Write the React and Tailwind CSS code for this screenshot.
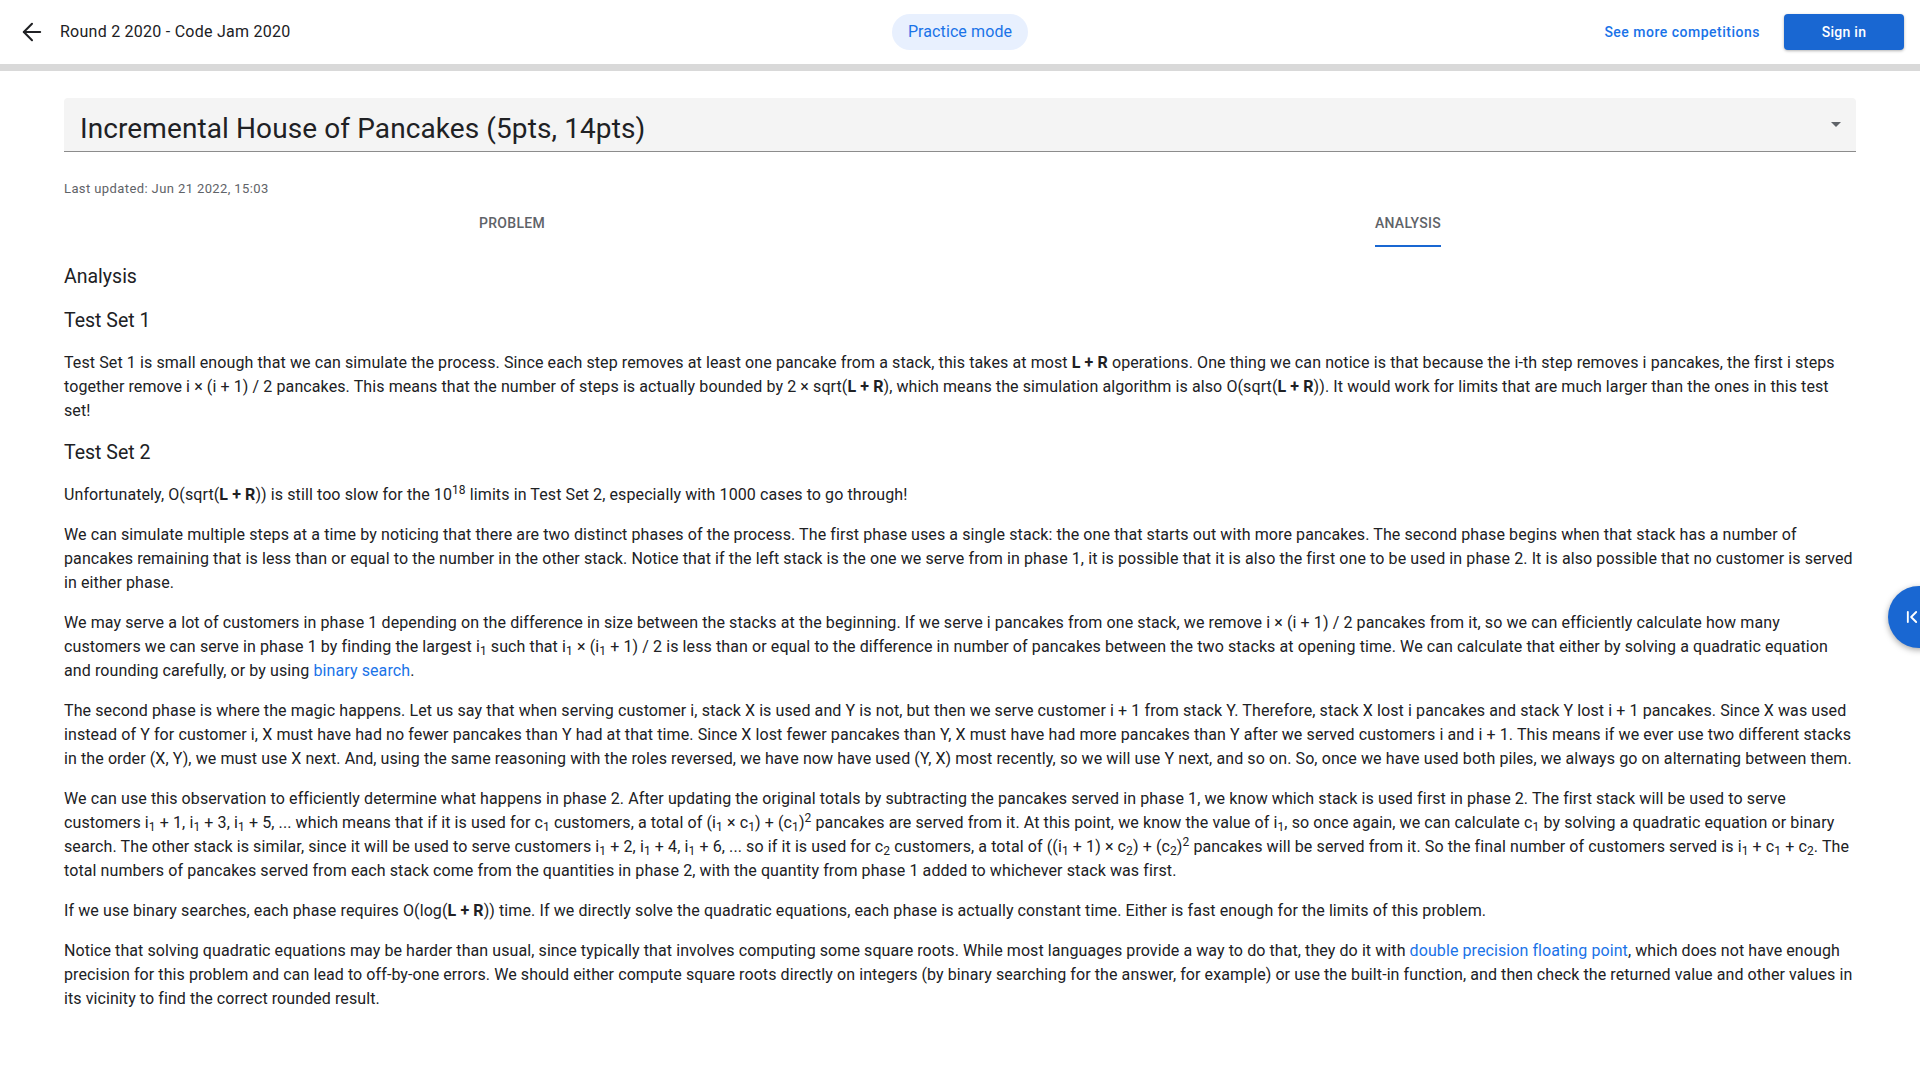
import { ArrowLeft, ChevronFirst } from "lucide-react";

const LR = () => <b className="font-bold">L + R</b>;
const S = ({ v, n }) => (
  <span className="whitespace-nowrap">
    {v}
    <sub>{n}</sub>
  </span>
);

function Tab({ label, active }) {
  return (
    <div className="flex justify-center">
      <div className="flex flex-col items-center h-12 pt-[14px]">
        <span className="text-sm font-medium tracking-[0.3px] text-[#5f6368] leading-5">{label}</span>
        <span className={"mt-auto h-[2px] w-full " + (active ? "bg-[#1967d2]" : "bg-transparent")} />
      </div>
    </div>
  );
}

export default function App() {
  return (
    <div className="relative min-h-screen overflow-hidden bg-white font-['Roboto',sans-serif] text-[#202124]">
      <header className="grid h-[71px] grid-cols-[1fr_auto_1fr] items-center border-b-[7px] border-[#d9d9d9]">
        <div className="flex items-center">
          <ArrowLeft size={28} strokeWidth={1.75} className="ml-[18px] text-[#202124]" />
          <span className="ml-[14px] text-base tracking-[0.25px]">Round 2 2020 - Code Jam 2020</span>
        </div>
        <div className="flex h-9 items-center rounded-full bg-[#e8f0fe] px-4 text-base tracking-[0.1px] text-[#1a73e8]">
          Practice mode
        </div>
        <div className="flex items-center justify-end pr-4">
          <span className="text-sm font-medium tracking-[0.5px] text-[#1a73e8]">See more competitions</span>
          <button className="ml-[24px] flex h-9 w-[120px] items-center justify-center rounded bg-[#1967d2] text-sm font-medium tracking-[0.25px] text-white shadow-[0_1px_3px_rgba(0,0,0,0.3)]">
            Sign in
          </button>
        </div>
      </header>

      <main className="px-16 pt-[27px]">
        <div className="flex h-[54px] items-center justify-between rounded-t bg-[#f4f4f4] border-b border-[#8c8c8c] pl-4 pr-[15px] pt-2">
          <h1 className="text-[28px] leading-9 tracking-[0.1px]">Incremental House of Pancakes (5pts, 14pts)</h1>
          <span className="mb-2 h-0 w-0 border-x-[5px] border-t-[5px] border-x-transparent border-t-[#5f6368]" />
        </div>

        <div className="mt-[27px] text-[13px] leading-5 tracking-[0.4px] text-[#5f6368]">
          Last updated: Jun 21 2022, 15:03
        </div>

        <div className="grid grid-cols-2">
          <Tab label="PROBLEM" />
          <Tab label="ANALYSIS" active />
        </div>

        <article className="mt-4 flex flex-col gap-4 text-base leading-6 tracking-[0.1px]">
          <h2 className="text-[19.5px] leading-7 tracking-normal">Analysis</h2>
          <h3 className="text-[19.5px] leading-7 tracking-normal">Test Set 1</h3>
          <p>
            Test Set 1 is small enough that we can simulate the process. Since each step removes at least one pancake
            from a stack, this takes at most <LR /> operations. One thing we can notice is that because the i-th step
            removes i pancakes, the first i steps together remove i × (i + 1) / 2 pancakes. This means that the number of
            steps is actually bounded by 2 × sqrt(<LR />), which means the simulation algorithm is also O(sqrt(<LR />)).
            It would work for limits that are much larger than the ones in this test set!
          </p>
          <h3 className="text-[19.5px] leading-7 tracking-normal">Test Set 2</h3>
          <p>
            Unfortunately, O(sqrt(<LR />)) is still too slow for the 10<sup>18</sup> limits in Test Set 2, especially
            with 1000 cases to go through!
          </p>
          <p>
            We can simulate multiple steps at a time by noticing that there are two distinct phases of the process. The
            first phase uses a single stack: the one that starts out with more pancakes. The second phase begins when that
            stack has a number of pancakes remaining that is less than or equal to the number in the other stack. Notice
            that if the left stack is the one we serve from in phase 1, it is possible that it is also the first one to be
            used in phase 2. It is also possible that no customer is served in either phase.
          </p>
          <p>
            We may serve a lot of customers in phase 1 depending on the difference in size between the stacks at the
            beginning. If we serve i pancakes from one stack, we remove i × (i + 1) / 2 pancakes from it, so we can
            efficiently calculate how many customers we can serve in phase 1 by finding the largest <S v="i" n="1" /> such
            that <S v="i" n="1" /> × (<S v="i" n="1" /> + 1) / 2 is less than or equal to the difference in number of
            pancakes between the two stacks at opening time. We can calculate that either by solving a quadratic equation
            and rounding carefully, or by using <a className="text-[#1a73e8]">binary search</a>.
          </p>
          <p>
            The second phase is where the magic happens. Let us say that when serving customer i, stack X is used and Y is
            not, but then we serve customer i + 1 from stack Y. Therefore, stack X lost i pancakes and stack Y lost i + 1
            pancakes. Since X was used instead of Y for customer i, X must have had no fewer pancakes than Y had at that
            time. Since X lost fewer pancakes than Y, X must have had more pancakes than Y after we served customers i and
            i + 1. This means if we ever use two different stacks in the order (X, Y), we must use X next. And, using the
            same reasoning with the roles reversed, we have now have used (Y, X) most recently, so we will use Y next, and
            so on. So, once we have used both piles, we always go on alternating between them.
          </p>
          <p>
            We can use this observation to efficiently determine what happens in phase 2. After updating the original
            totals by subtracting the pancakes served in phase 1, we know which stack is used first in phase 2. The first
            stack will be used to serve customers <S v="i" n="1" /> + 1, <S v="i" n="1" /> + 3, <S v="i" n="1" /> + 5,
            ... which means that if it is used for <S v="c" n="1" /> customers, a total of (<S v="i" n="1" /> ×{" "}
            <S v="c" n="1" />) + (<S v="c" n="1" />)<sup>2</sup> pancakes are served from it. At this point, we know the
            value of <S v="i" n="1" />, so once again, we can calculate <S v="c" n="1" /> by solving a quadratic equation
            or binary search. The other stack is similar, since it will be used to serve customers <S v="i" n="1" /> + 2,{" "}
            <S v="i" n="1" /> + 4, <S v="i" n="1" /> + 6, ... so if it is used for <S v="c" n="2" /> customers, a total
            of ((<S v="i" n="1" /> + 1) × <S v="c" n="2" />) + (<S v="c" n="2" />)<sup>2</sup> pancakes will be served
            from it. So the final number of customers served is <S v="i" n="1" /> + <S v="c" n="1" /> +{" "}
            <S v="c" n="2" />. The total numbers of pancakes served from each stack come from the quantities in phase 2,
            with the quantity from phase 1 added to whichever stack was first.
          </p>
          <p>
            If we use binary searches, each phase requires O(log(<LR />)) time. If we directly solve the quadratic
            equations, each phase is actually constant time. Either is fast enough for the limits of this problem.
          </p>
          <p className="tracking-[0.085px]">
            Notice that solving quadratic equations may be harder than usual, since typically that involves computing some
            square roots. While most languages provide a way to do that, they do it with{" "}
            <a className="text-[#1a73e8]">double precision floating point</a>, which does not have enough precision for
            this problem and can lead to off-by-one errors. We should either compute square roots directly on integers (by
            binary searching for the answer, for example) or use the built-in function, and then check the returned value
            and other values in its vicinity to find the correct rounded result.
          </p>
        </article>
      </main>

      <button className="absolute right-[-32px] top-[586px] flex h-[62px] w-[64px] items-center rounded-full bg-[#1967d2] pl-[14px] text-white shadow-[0_2px_6px_rgba(0,0,0,0.35)]">
        <ChevronFirst size={20} strokeWidth={2.25} />
      </button>
    </div>
  );
}
